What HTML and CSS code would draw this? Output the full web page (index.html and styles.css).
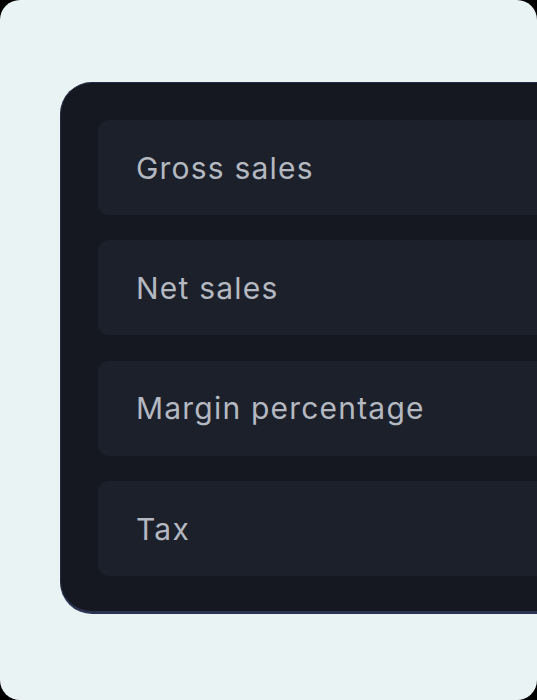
FILE: index.html
```html
<!DOCTYPE html>
<html>
<head>
<meta charset="utf-8">
<link rel="stylesheet" href="styles.css">
</head>
<body>
<div class="frame">
  <div class="panel">
    <div class="row">Gross sales</div>
    <div class="row">Net sales</div>
    <div class="row">Margin percentage</div>
    <div class="row">Tax</div>
  </div>
</div>
</body>
</html>
```
FILE: styles.css
```css
html, body {
  margin: 0;
  padding: 0;
  background: #000;
}
.frame {
  width: 537px;
  height: 700px;
  box-sizing: border-box;
  background: #eaf3f3;
  border-radius: 20px;
  overflow: hidden;
  padding: 82px 0 0 60px;
}
.panel {
  width: 640px;
  height: 532px;
  box-sizing: border-box;
  background: #151821;
  border: 1px solid #262c40;
  border-bottom: 3px solid #2c3350;
  border-radius: 32px;
  padding: 37px;
  display: flex;
  flex-direction: column;
  gap: 25.4px;
}
.row {
  height: 95px;
  flex: none;
  background: #1c202b;
  border-radius: 11px;
  display: flex;
  align-items: center;
  padding-left: 38px;
  font-family: Inter, "Noto Sans", sans-serif;
  font-size: 30px;
  font-weight: 400;
  color: #b4b8c0;
  letter-spacing: 1.2px;
}
```
